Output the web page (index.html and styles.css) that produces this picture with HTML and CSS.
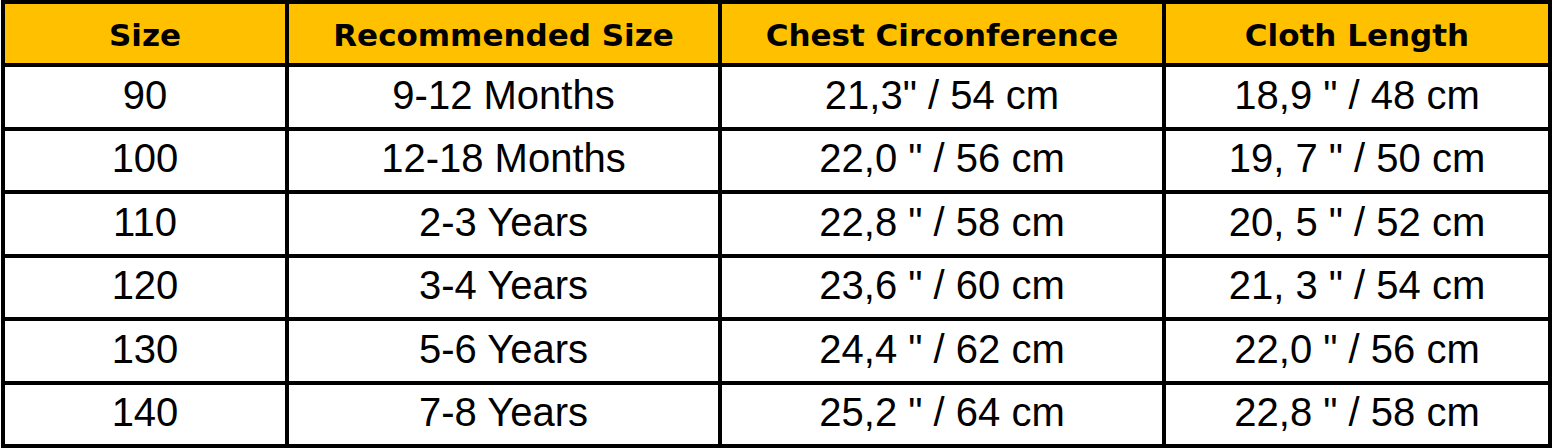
FILE: index.html
```html
<!DOCTYPE html>
<html lang="en">
<head>
<meta charset="utf-8">
<title>Size Chart</title>
<link rel="stylesheet" href="styles.css">
</head>
<body>
<table class="size-table">
  <colgroup>
    <col class="c1"><col class="c2"><col class="c3"><col class="c4">
  </colgroup>
  <thead>
    <tr class="head-row">
      <th>Size</th>
      <th>Recommended Size</th>
      <th>Chest Circonference</th>
      <th>Cloth Length</th>
    </tr>
  </thead>
  <tbody>
    <tr><td>90</td><td>9-12 Months</td><td>21,3" / 54 cm</td><td>18,9 " / 48 cm</td></tr>
    <tr><td>100</td><td>12-18 Months</td><td>22,0 " / 56 cm</td><td>19, 7 " / 50 cm</td></tr>
    <tr><td>110</td><td>2-3 Years</td><td>22,8 " / 58 cm</td><td>20, 5 " / 52 cm</td></tr>
    <tr><td>120</td><td>3-4 Years</td><td>23,6 " / 60 cm</td><td>21, 3 " / 54 cm</td></tr>
    <tr><td>130</td><td>5-6 Years</td><td>24,4 " / 62 cm</td><td>22,0 " / 56 cm</td></tr>
    <tr><td>140</td><td>7-8 Years</td><td>25,2 " / 64 cm</td><td>22,8 " / 58 cm</td></tr>
  </tbody>
</table>
</body>
</html>
```
FILE: styles.css
```css
html, body {
  margin: 0;
  padding: 0;
  background: #ffffff;
}

body {
  padding-left: 1px;
}

.size-table {
  border-collapse: collapse;
  table-layout: fixed;
  width: 1551px;
  border: 4px solid #000;
  border-top-width: 2px;
  font-family: "Liberation Sans", Arial, sans-serif;
  color: #000;
}

.c1 { width: 284px; }
.c2 { width: 433px; }
.c3 { width: 444px; }
.c4 { width: 386px; }

.size-table th,
.size-table td {
  border: 4px solid #000;
  text-align: center;
  vertical-align: middle;
  padding: 0;
}

.size-table th {
  background: #ffc000;
  font-family: "DejaVu Sans", "Liberation Sans", sans-serif;
  font-weight: 700;
  font-size: 31px;
  height: 55px;
  padding-top: 4px;
  line-height: 1;
}

.size-table td {
  font-size: 40px;
  height: 55.5px;
  line-height: 1;
  padding-bottom: 4px;
}
```
